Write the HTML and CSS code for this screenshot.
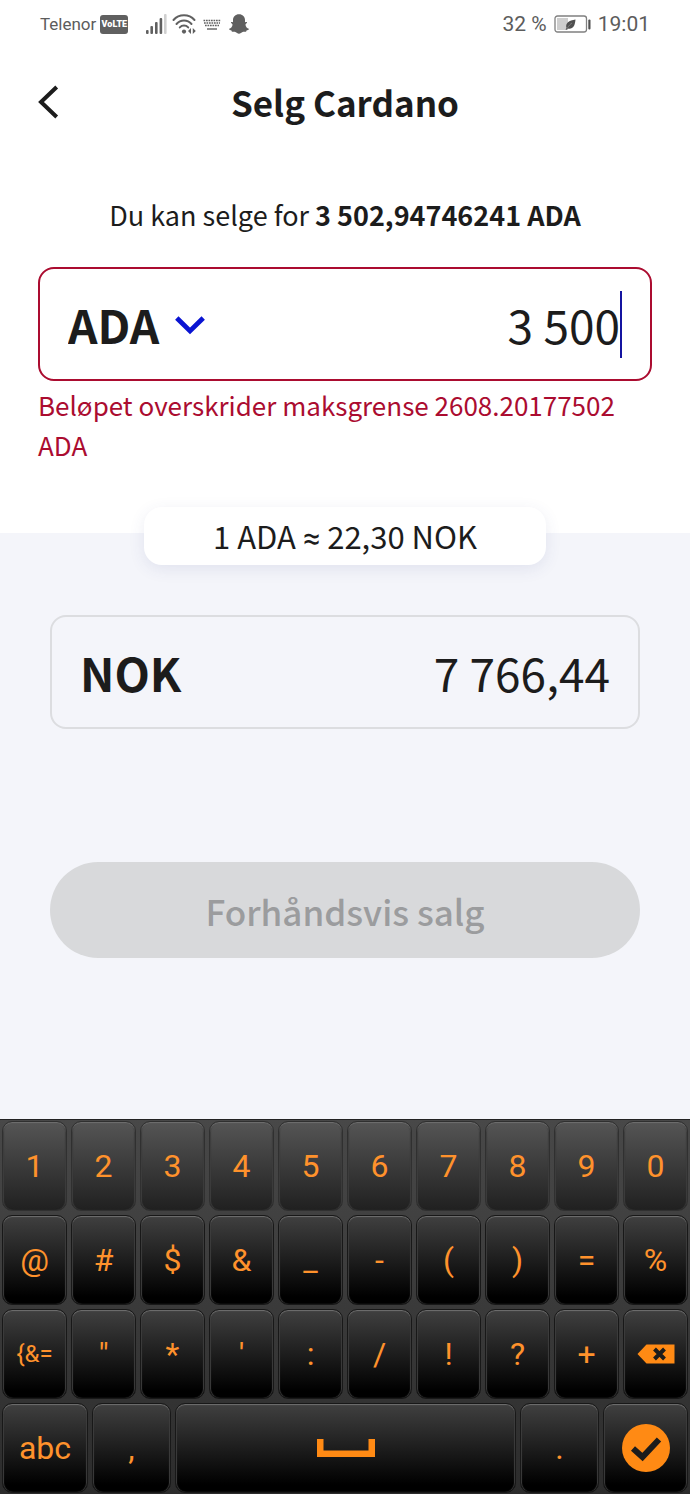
FILE: index.html
```html
<!DOCTYPE html>
<html lang="nb">
<head>
<meta charset="utf-8">
<meta name="viewport" content="width=device-width, initial-scale=1">
<title>Selg Cardano</title>
<link rel="stylesheet" href="styles.css">
</head>
<body>
<div class="screen">
  <div class="status">
    <div class="status-group">
      <span class="carrier">Telenor</span>
      <span class="volte">VoLTE</span>
      <svg class="signal" width="22" height="20" viewBox="0 0 22 20" aria-hidden="true">
        <g fill="#606060"><rect x="1" y="16" width="2.6" height="4" rx="1"/><rect x="5.4" y="12" width="2.6" height="8" rx="1"/><rect x="10" y="8" width="2.6" height="12" rx="1"/><rect x="14.6" y="4" width="2.6" height="16" rx="1"/></g>
        <rect x="19" y="0" width="2.6" height="20" rx="1" fill="#d0d0d0"/>
      </svg>
      <svg class="wifi" width="24" height="20" viewBox="0 0 24 20" aria-hidden="true">
        <g fill="none" stroke="#606060" stroke-width="2" stroke-linecap="round"><path d="M1.500 6C7 -.300 17 -.300 22.500 6"/><path d="M4.500 10C8.500 5.200 15.500 5.200 19.500 10"/><path d="M7.800 13.400C10 11 14 11 16.200 13.400"/></g>
        <circle cx="12" cy="17.600" r="2.100" fill="#606060"/>
        <path d="M19 14v6l-3-3zM20.800 20v-6l3 3z" fill="#606060"/>
      </svg>
      <svg class="keys-icon" width="18" height="11" viewBox="0 0 18 11" aria-hidden="true">
        <g stroke="#606060" fill="none"><path d="M.5 1.500h17" stroke-width="1.400" stroke-dasharray="1.700 .800"/><path d="M1 4h16" stroke-width="1.400" stroke-dasharray="1.700 .800"/><path d="M2 6.500h14" stroke-width="1.400" stroke-dasharray="1.700 .800"/><path d="M4 10h10" stroke-width="1.400"/></g>
      </svg>
      <svg class="ghost" width="20" height="20" viewBox="0 0 20 20" aria-hidden="true">
        <path fill="#606060" d="M10 .3c3.600 0 6 2.400 6 5.800v2c.8.300 1.600-.4 2 .2.300.9-1.700 1.500-1.500 2.600.3 1.900 1.600 3.200 3.300 3.800.3 1.400-1.400 1.600-2.300 1.800-.2.500-.1 1.200-.7 1.300-1 .1-2.200-.3-3.200.3-1.100.8-2.200 1.600-3.600 1.600s-2.500-.8-3.600-1.600c-1-.6-2.200-.2-3.200-.3-.6-.1-.5-.8-.7-1.300-.9-.2-2.600-.4-2.300-1.800 1.700-.6 3-1.900 3.300-3.800.2-1.100-1.800-1.700-1.500-2.600.4-.6 1.200.1 2-.2v-2C4 2.700 6.400.3 10 .3z"/>
      </svg>
    </div>
    <div class="status-group status-right">
      <span>32 %</span>
      <svg width="37" height="18" viewBox="0 0 37 18" aria-hidden="true">
        <rect x="1" y="1" width="31.500" height="16" rx="2.500" fill="#fff" stroke="#808080" stroke-width="1.300"/>
        <rect x="3" y="3" width="11" height="12" fill="#cecece"/>
        <path d="M21.500 4.500C15 5.500 11 8 12.500 13l-1 1.500 1.200.3 1-1.300C19 14.500 21 11 21.500 4.500z" fill="#505050"/>
        <path d="M13.500 12.800c1.500-2.500 3-3.800 4.500-4.800" stroke="#999" stroke-width=".6" fill="none"/>
        <rect x="34.300" y="4.500" width="2.200" height="10" rx="1" fill="#505050"/>
      </svg>
      <span>19:01</span>
    </div>
  </div>

  <header class="header">
    <button class="back" type="button" aria-label="Tilbake">
      <svg width="22" height="34" viewBox="0 0 22 34" aria-hidden="true"><path d="M18.700 2L3 17l15.700 15" fill="none" stroke="#1c1c1c" stroke-width="4"/></svg>
    </button>
    <h1 class="title">Selg Cardano</h1>
  </header>

  <main class="main">
    <section class="sell">
      <p class="available">Du kan selge for <strong>3 502,94746241 ADA</strong></p>
      <div class="field field-error">
        <label class="currency">
          <select class="currency-select" aria-label="Valuta"><option>ADA</option></select>
          <svg width="30" height="22" viewBox="0 0 30 22" aria-hidden="true"><path d="M1.800 5L15 18 28.200 5" fill="none" stroke="#0a14d2" stroke-width="4.800"/></svg>
        </label>
        <input class="amount" type="text" inputmode="decimal" aria-label="Beløp i ADA" value="3 500">
        <span class="caret"></span>
      </div>
      <p class="error">Beløpet overskrider maksgrense 2608.20177502 ADA</p>
    </section>

    <section class="receive">
      <p class="rate">1 ADA <span class="approx">≈</span> 22,30 NOK</p>
      <div class="field">
        <label class="unit" for="nok">NOK</label>
        <input class="amount" id="nok" type="text" inputmode="decimal" value="7 766,44">
      </div>
      <button class="preview" type="button" disabled>Forhåndsvis salg</button>
    </section>
  </main>

  <div class="keyboard">
    <div class="row row-digits">
      <button class="key">1</button><button class="key">2</button><button class="key">3</button><button class="key">4</button><button class="key">5</button><button class="key">6</button><button class="key">7</button><button class="key">8</button><button class="key">9</button><button class="key">0</button>
    </div>
    <div class="row">
      <button class="key">@</button><button class="key">#</button><button class="key">$</button><button class="key">&amp;</button><button class="key">_</button><button class="key">-</button><button class="key">(</button><button class="key">)</button><button class="key">=</button><button class="key">%</button>
    </div>
    <div class="row">
      <button class="key key-small">{&amp;=</button><button class="key">"</button><button class="key">*</button><button class="key">'</button><button class="key">:</button><button class="key">/</button><button class="key">!</button><button class="key">?</button><button class="key">+</button>
      <button class="key" aria-label="Slett">
        <svg width="38" height="20" viewBox="0 0 38 20" aria-hidden="true"><path d="M.5 10L9.500 .5H37.500v19H9.500z" fill="#ff8a14"/><path d="M17.500 5l10 10M27.500 5l-10 10" stroke="#1c1c1c" stroke-width="4"/></svg>
      </button>
    </div>
    <div class="row row-bottom">
      <button class="key">abc</button><button class="key">,</button>
      <button class="key" aria-label="Mellomrom">
        <svg width="60" height="20" viewBox="0 0 60 20" aria-hidden="true"><path d="M1 1h6.500v11.500h45V1H59v18H1z" fill="#ff8a14"/></svg>
      </button>
      <button class="key">.</button>
      <button class="key" aria-label="Ferdig">
        <svg width="48" height="48" viewBox="0 0 48 48" aria-hidden="true"><circle cx="24" cy="24" r="24" fill="#ff8a14"/><path d="M11 24.500l9.500 8.500L37 15.500" fill="none" stroke="#1c1c1c" stroke-width="6"/></svg>
      </button>
    </div>
  </div>
</div>
</body>
</html>
```
FILE: styles.css
```css
* { box-sizing: border-box; }

body {
  margin: 0;
  background: #fff;
  color: #1c1c1c;
  font-family: "Noto Sans CJK SC", sans-serif;
}

h1, p { margin: 0; }

button, input, select {
  margin: 0;
  padding: 0;
  border: 0;
  background: none;
  color: inherit;
  font: inherit;
}

svg { display: block; flex: none; }

.screen {
  display: flex;
  flex-direction: column;
  min-height: 100vh;
}

.status {
  display: flex;
  justify-content: space-between;
  height: 48px;
  padding: 0 40px;
  color: #5c5c5c;
  font-family: Roboto, sans-serif;
  font-size: 21px;
}

.status-group { display: flex; align-items: center; }
.status-right { gap: 7px; }
.carrier { font-size: 17px; }

.volte {
  min-width: 28px;
  margin: 0 17px 0 4px;
  border-radius: 3px;
  background: #606060;
  color: #fff;
  font-size: 9px;
  font-weight: 900;
  line-height: 19px;
  text-align: center;
}

.signal { margin-right: 5px; }
.keys-icon { margin: 0 8px 0 7px; }

.header {
  display: grid;
  grid-template-columns: 48px 1fr 48px;
  align-items: center;
  height: 108px;
  padding: 0 38px;
}

.back { justify-self: start; }

.title {
  font-size: 35px;
  line-height: 48px;
  text-align: center;
}

.main {
  display: flex;
  flex: 1;
  flex-direction: column;
}

.sell { padding: 39px 38px 68px; }

.available {
  margin-bottom: 32px;
  font-size: 27px;
  line-height: 40px;
  text-align: center;
}

.field {
  display: flex;
  align-items: center;
  height: 114px;
  padding: 0 28px;
  border: 2px solid #dcdde0;
  border-radius: 16px;
  font-size: 46px;
  line-height: 68px;
}

.field-error { border-color: #ab0c30; }

.currency { display: flex; align-items: center; gap: 15px; font-weight: 700; }
.currency-select { appearance: none; height: 68px; line-height: 68px; }
.unit { font-weight: 700; }

.amount {
  flex: 1;
  min-width: 0;
  height: 68px;
  outline: 0;
  text-align: right;
}

.caret { width: 2px; height: 67px; background: #1414a0; }

.error {
  padding-top: 4px;
  color: #ab0c30;
  font-size: 26px;
  line-height: 40px;
}

.receive {
  display: flex;
  flex: 1;
  flex-direction: column;
  padding: 0 50px 48px;
  background: #f4f5fa;
}

.rate {
  align-self: center;
  width: 68%;
  margin: -26px 0 50px;
  border-radius: 18px;
  background: #fff;
  box-shadow: 0 4px 16px rgba(60, 70, 140, 0.1);
  font-size: 31px;
  line-height: 58px;
  text-align: center;
}

.approx { font-family: Roboto, sans-serif; line-height: 1; }

.preview {
  height: 96px;
  margin-top: 133px;
  border-radius: 48px;
  background: #d8d9db;
  color: #9b9c9e;
  font-size: 35px;
  font-weight: 500;
}

.keyboard {
  display: grid;
  gap: 4px;
  padding: 1px 2px;
  border-top: 1px solid #222;
  background: linear-gradient(#484848, #2c2c2c);
  color: #ff922c;
  font-family: Roboto, sans-serif;
  font-size: 32px;
}

.row {
  display: grid;
  grid-template-columns: repeat(10, minmax(0, 1fr));
  gap: 4px;
}

.row-bottom { grid-template-columns: 86fr 79fr 341fr 79fr 85fr; }

.key {
  display: flex;
  align-items: center;
  justify-content: center;
  height: 90px;
  border: 1px solid #181818;
  border-radius: 10px;
  background: linear-gradient(#404040, #000 92%);
  box-shadow: inset 0 1px 1px #707070, inset 1px 0 1px #383838, inset -1px 0 1px #383838;
}

.row-digits .key {
  border-color: #303030;
  background: linear-gradient(#555, #202020);
}

.key-small { font-size: 24px; }
```
